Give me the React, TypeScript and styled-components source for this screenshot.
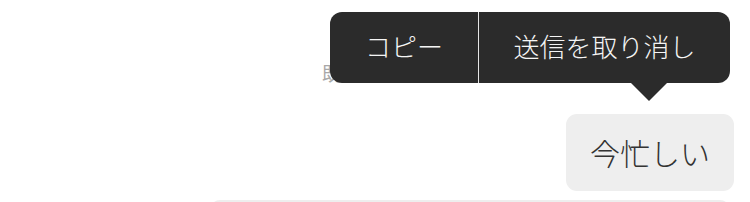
import React from 'react';
import styled, { createGlobalStyle } from 'styled-components';

const GlobalStyle = createGlobalStyle`
  html, body {
    margin: 0;
    padding: 0;
    background: #ffffff;
  }
  body {
    font-family: "Noto Sans CJK JP", "Noto Sans", sans-serif;
  }
`;

const StyledScreen = styled.section`
  width: 750px;
  height: 202px;
  position: relative;
  overflow: hidden;
  background: #ffffff;
`;

const StyledMetaRow = styled.div`
  padding: 58px 0 0 322px;
  height: 88px;
  box-sizing: border-box;
  display: flex;
  align-items: center;
`;

const StyledMeta = styled.span`
  font-size: 19px;
  line-height: 22px;
  color: #a8a8a8;
`;

const StyledMessageRow = styled.div`
  display: flex;
  justify-content: flex-end;
  padding: 26px 16px 0 0;
`;

const StyledBubble = styled.div`
  height: 77px;
  padding: 0 24px 2px;
  display: flex;
  align-items: center;
  border-radius: 11px;
  background: #eeeeee;
  color: #333333;
  font-size: 30px;
  font-weight: 300;
  box-sizing: border-box;
`;

const StyledNextBubble = styled.div`
  margin: 9px 20px 0 210px;
  height: 20px;
  border-radius: 10px 10px 0 0;
  background: #fafafa;
  border-top: 2px solid #eeeeee;
`;

const StyledMenu = styled.div`
  position: absolute;
  left: 330px;
  top: 12px;
  width: 400px;
  height: 71px;
  display: flex;
  border-radius: 12px;
  background: #2b2b2b;

  &::after {
    content: '';
    position: absolute;
    left: 301px;
    top: 71px;
    border-left: 18px solid transparent;
    border-right: 18px solid transparent;
    border-top: 18px solid #2b2b2b;
  }
`;

const StyledMenuButton = styled.button<{ $width: number; $divider?: boolean }>`
  width: ${(p) => p.$width}px;
  height: 100%;
  border: 0;
  margin: 0;
  padding: 0 0 4px;
  background: transparent;
  color: #f5f5f5;
  font-family: "Noto Sans CJK JP", "Noto Sans", sans-serif;
  font-size: 26px;
  font-weight: 300;
  border-right: ${(p) => (p.$divider ? '1px solid #e6e6e6' : 'none')};
  box-sizing: border-box;
`;

const App: React.FC = () => {
  return (
    <>
      <GlobalStyle />
      <StyledScreen>
        <StyledMetaRow>
          <StyledMeta>既読</StyledMeta>
        </StyledMetaRow>
        <StyledMessageRow>
          <StyledBubble>今忙しい</StyledBubble>
        </StyledMessageRow>
        <StyledNextBubble />
        <StyledMenu>
          <StyledMenuButton $width={149} $divider>
            コピー
          </StyledMenuButton>
          <StyledMenuButton $width={251}>送信を取り消し</StyledMenuButton>
        </StyledMenu>
      </StyledScreen>
    </>
  );
};

export default App;
